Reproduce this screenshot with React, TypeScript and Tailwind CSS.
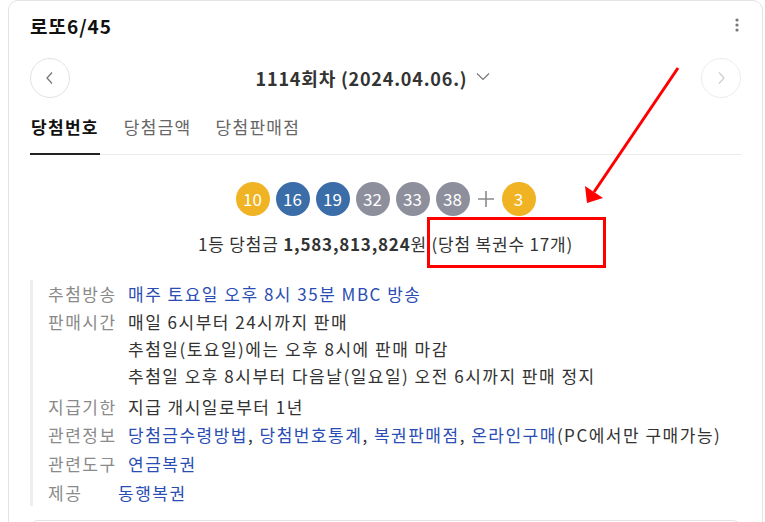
import * as React from "react";

const BALLS = [
  { n: 10, color: "bg-[#efb324]" },
  { n: 16, color: "bg-[#3b6ea8]" },
  { n: 19, color: "bg-[#3b6ea8]" },
  { n: 32, color: "bg-[#8d8f9d]" },
  { n: 33, color: "bg-[#8d8f9d]" },
  { n: 38, color: "bg-[#8d8f9d]" },
];

function Ball({ n, color }: { n: number; color: string }) {
  return (
    <span
      className={`flex h-[34px] w-[34px] items-center justify-center rounded-full text-[17px] text-white ${color}`}
    >
      {n}
    </span>
  );
}

function Row({
  label,
  children,
  narrow,
  gap = "mt-[1px]",
}: {
  label: string;
  children: React.ReactNode;
  narrow?: boolean;
  gap?: string;
}) {
  return (
    <div className={`flex ${gap}`}>
      <span className={`shrink-0 text-[#8a8a8a] ${narrow ? "w-[70px]" : "w-[80px]"}`}>{label}</span>
      <div className="text-[#333]">{children}</div>
    </div>
  );
}

export default function App() {
  return (
    <div
      className="relative h-[522px] w-[765px] overflow-hidden bg-white"
      style={{ fontFamily: '"Noto Sans CJK KR", "Noto Sans", sans-serif' }}
    >
      <div className="ml-[8px] h-[560px] w-[755px] rounded-[10px] border border-[#e3e3e3] px-[21px]">
        {/* header */}
        <div className="flex items-center justify-between pt-[12px]">
          <h1 className="text-[19px] font-bold leading-[26px] tracking-[1px] text-[#111]">로또6/45</h1>
          <svg width="4" height="14" viewBox="0 0 4 14" className="mr-[2px] mt-[-3px]">
            <circle cx="2" cy="2" r="1.6" fill="#777" />
            <circle cx="2" cy="7" r="1.6" fill="#777" />
            <circle cx="2" cy="12" r="1.6" fill="#777" />
          </svg>
        </div>

        {/* round nav */}
        <div className="mt-[19px] flex items-center">
          <button className="flex h-[40px] w-[40px] items-center justify-center rounded-full border border-[#e2e2e2]">
            <svg width="10" height="14" viewBox="0 0 10 14">
              <path d="M7 1.5 L2 7 L7 12.5" fill="none" stroke="#777" strokeWidth="1.3" />
            </svg>
          </button>
          <div className="flex flex-1 items-center justify-center pr-[25px]">
            <span className="text-[18px] font-bold leading-[24px] tracking-[0.8px] text-[#333]">
              1114회차 (2024.04.06.)
            </span>
            <svg width="14" height="9" viewBox="0 0 14 9" className="ml-[9px] mt-[-3px]">
              <path d="M1 1.5 L7 7.5 L13 1.5" fill="none" stroke="#777" strokeWidth="1.2" />
            </svg>
          </div>
          <button className="flex h-[40px] w-[40px] items-center justify-center rounded-full border border-[#ececec]">
            <svg width="10" height="14" viewBox="0 0 10 14">
              <path d="M3 1.5 L8 7 L3 12.5" fill="none" stroke="#cfcfcf" strokeWidth="1.3" />
            </svg>
          </button>
        </div>

        {/* tabs */}
        <div className="mt-[17px] flex gap-[24px] border-b border-[#ebebeb] text-[17px] leading-[24px] tracking-[1.3px]">
          <span className="-mb-[1px] border-b-2 border-[#222] px-[1px] pb-[14px] font-bold text-[#111]">당첨번호</span>
          <span className="pb-[14px] text-[#666]">당첨금액</span>
          <span className="pb-[14px] text-[#666]">당첨판매점</span>
        </div>

        {/* balls */}
        <div className="mt-[27px] flex items-center justify-center gap-[6px]">
          {BALLS.map((b) => (
            <Ball key={b.n} n={b.n} color={b.color} />
          ))}
          <svg width="18" height="18" viewBox="0 0 18 18" className="mx-[1px]">
            <path d="M9 1 V17 M1 9 H17" stroke="#8a8a8a" strokeWidth="1.6" />
          </svg>
          <Ball n={3} color="bg-[#efb324]" />
        </div>

        <p className="mt-[16px] text-center text-[17px] leading-[24px] tracking-[0.8px] text-[#333]">
          1등 당첨금 <b className="font-bold">1,583,813,824</b>원 (당첨 복권수 17개)
        </p>

        {/* info */}
        <div className="mt-[24px] border-l-[3px] border-[#eeeeee] pl-[15px] text-[17px] leading-[27px] tracking-[1.5px]">
          <Row label="추첨방송" gap="mt-0">
            <span className="text-[#2a4db3]">매주 토요일 오후 8시 35분 MBC 방송</span>
          </Row>
          <Row label="판매시간">
            <div>매일 6시부터 24시까지 판매</div>
            <div>추첨일(토요일)에는 오후 8시에 판매 마감</div>
            <div>추첨일 오후 8시부터 다음날(일요일) 오전 6시까지 판매 정지</div>
          </Row>
          <Row label="지급기한" gap="mt-[4px]">
            지급 개시일로부터 1년
          </Row>
          <Row label="관련정보">
            <span className="text-[#2a4db3]">당첨금수령방법</span>,{" "}
            <span className="text-[#2a4db3]">당첨번호통계</span>,{" "}
            <span className="text-[#2a4db3]">복권판매점</span>,{" "}
            <span className="text-[#2a4db3]">온라인구매</span>(PC에서만 구매가능)
          </Row>
          <Row label="관련도구" gap="mt-[2px]">
            <span className="text-[#2a4db3]">연금복권</span>
          </Row>
          <Row label="제공" narrow gap="mt-[2px]">
            <span className="text-[#2a4db3]">동행복권</span>
          </Row>
        </div>

        <div className="mt-[14px] h-[40px] rounded-[8px] border border-[#e3e3e3]" />
      </div>

      {/* annotation */}
      <div className="absolute left-[427px] top-[217px] h-[51px] w-[179px] border-[3px] border-[#ff0000]" />
      <svg className="absolute left-0 top-0" width="765" height="522" viewBox="0 0 765 522">
        <line x1="678" y1="68" x2="594" y2="192" stroke="#ff0000" strokeWidth="3" />
        <polygon points="587,203 585,186 603,198" fill="#ff0000" />
      </svg>
    </div>
  );
}
